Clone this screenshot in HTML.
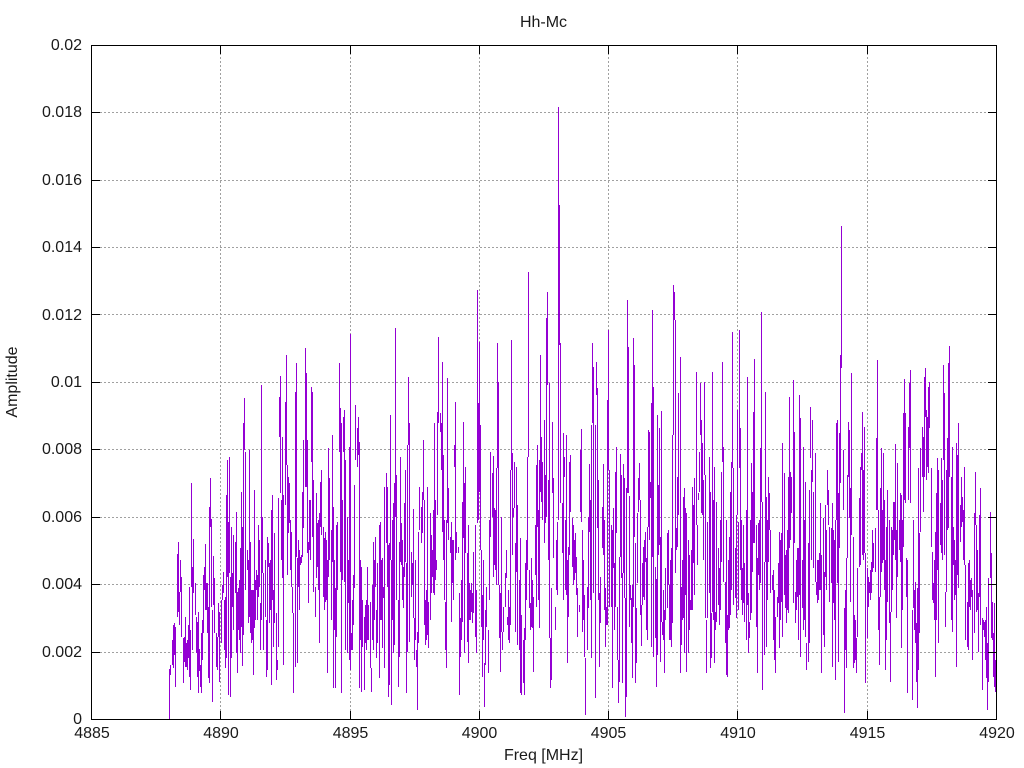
<!DOCTYPE html>
<html><head><meta charset="utf-8"><title>Hh-Mc</title>
<style>html,body{margin:0;padding:0;background:#fff;overflow:hidden}svg{display:block}text{font-family:"Liberation Sans",sans-serif;font-size:16px;fill:#1a1a1a}</style>
</head><body>
<svg width="1024" height="768" viewBox="0 0 1024 768" xmlns="http://www.w3.org/2000/svg">
<rect width="1024" height="768" fill="#fff"/>
<g stroke="#a0a0a0" stroke-width="1" stroke-dasharray="2 2" fill="none" shape-rendering="crispEdges">
<path d="M100 112.5H988M100 180.5H988M100 247.5H988M100 314.5H988M100 382.5H988M100 449.5H988M100 517.5H988M100 584.5H988M100 652.5H988"/>
<path d="M220.5 53V711M350.5 53V711M479.5 53V711M608.5 53V711M737.5 53V711M867.5 53V711"/>
</g>
<g transform="translate(.5,0)" stroke="#9400d3" stroke-width="1" fill="none" shape-rendering="crispEdges">
<path d="M169 669V719M170 665V675M172 640V665M173 625V668M174 623V655M175 627V687M177 554V617M178 542V612M179 592V625M180 560V592M181 577V637M183 638V683M184 637V662M185 617V667M186 643V667M188 625V658M189 587V677M190 630V690M191 483V587M192 567V650M193 539V593M195 583V615M196 617V653M197 622V677M198 612V693M199 649V671M200 665V687M201 633V693M203 575V633M204 567V590M205 544V610M206 583V610M207 583V633M208 607V678M209 507V683M210 478V527M211 519V607M212 610V702M213 556V605M214 578V633M216 633V667M217 637V670M218 603V637M219 612V682M221 600V643M222 585V600M223 572V593M225 597V668M226 495V658M227 460V577M228 522V695M229 457V573M230 577V697M231 527V658M232 573V607M233 535V630M235 542V593M236 512V653M237 592V673M238 588V630M240 548V653M241 492V627M242 527V666M243 423V635M244 398V450M245 452V590M247 550V570M248 560V623M249 450V617M250 542V633M251 590V643M253 590V675M254 490V628M255 580V620M256 570V590M257 575V620M258 525V597M259 540V587M260 603V650M261 385V620M262 517V573M263 573V650M265 560V617M266 620V677M267 537V670M268 543V567M269 563V623M271 510V685M272 495V600M273 590V647M274 533V623M276 613V680M277 660V670M278 498V647M279 397V437M280 376V493M282 437V578M283 495V665M285 402V505M286 355V465M287 465V575M288 477V533M289 483V523M291 532V587M292 587V613M293 613V693M295 392V667M296 363V557M297 558V663M298 540V587M300 557V565M301 555V563M302 492V557M303 440V528M305 348V487M306 373V487M307 440V553M308 542V603M309 500V550M311 387V462M312 392V537M313 480V592M315 587V617M316 493V578M317 523V567M319 513V643M320 482V527M321 470V535M323 527V597M324 538V610M325 532V602M327 560V673M328 448V577M329 478V560M331 530V620M332 435V562M333 507V688M335 588V688M336 525V637M337 522V590M339 363V452M340 408V572M341 423V693M343 417V452M344 410V582M345 460V650M347 517V653M348 560V603M349 447V660M350 334V670M351 633V650M353 575V625M354 485V588M355 405V460M357 428V467M358 417V455M359 442V688M361 567V692M362 600V647M364 617V690M365 605V643M367 567V640M368 605V640M370 602V668M371 668V692M372 585V640M373 542V650M375 537V587M376 610V658M377 563V643M379 525V678"/>
<path d="M380 522V620M382 558V648M383 587V598M384 487V668M386 473V543M387 487V587M388 545V697M389 543V685M390 415V560M391 560V705M393 503V653M394 483V645M395 328V517M396 475V600M398 600V687M399 542V657M400 457V562M401 523V565M403 567V608M404 503V577M405 470V562M406 563V693M407 445V652M408 377V445M409 423V642M411 552V597M412 563V585M413 509V618M414 618V660M416 650V667M417 632V710M418 532V643M419 487V530M421 507V543M422 492V533M423 440V500M424 500V625M425 600V645M427 487V635M428 602V648M430 513V620M431 535V593M432 550V577M433 510V593M434 423V595M436 560V570M437 412V515M438 337V423M440 413V432M441 423V470M442 362V532M443 455V560M445 602V650M446 520V668M447 378V523M448 488V540M450 537V553M451 522V622M452 540V583M454 445V467M455 402V560M456 532V553M458 547V553M459 593V695M460 618V657M462 502V622M463 422V538M464 483V653M465 467V553M467 553V642M468 525V663M469 583V620M471 583V612M472 593V623M473 552V613M475 525V637M476 590V653M477 290V523M478 403V520M479 342V492M480 425V550M481 550V627M482 595V677M484 663V707M485 610V665M486 587V627M488 630V673M490 452V537M492 473V517M493 456V577M494 508V565M496 468V585M497 343V468M498 382V585M499 585V638M500 593V672M501 517V632M502 632V650M503 607V632M505 573V607M506 550V578M507 617V625M509 607V643M510 470V625M511 340V470M512 453V555M513 508V517M514 462V508M515 543V632M516 467V572M517 505V645M520 538V693M521 615V695M523 640V683M524 628V695M525 563V640M527 457V570M528 272V457M529 570V608M530 603V630M531 558V627M532 580V628M533 597V672M535 525V575M536 465V607M537 445V527M539 460V628M540 355V492M541 437V502M542 462V520M544 420V543M545 475V523M546 318V517M547 292V385M549 383V638M550 638V688M551 588V680M552 422V493M553 478V558M555 607V630M557 522V595M558 107V520M559 205V345M560 343V503M562 503V553M563 433V600M564 457V477M566 435V595M567 560V663M568 547V617M569 462V555M570 455V512M572 518V567M573 525V585M575 533V573M576 557V595M577 588V637M579 605V612M580 450V512M581 429V522M582 530V632M584 595V657M585 658V715M587 587V650M588 517V608M589 464V532M591 425V658M592 343V423M593 367V593M595 425V698M596 362V395M597 388V528M599 593V667"/>
<path d="M600 577V623M602 507V548M603 464V555M605 588V647M606 607V625M607 400V625M608 330V470M609 470V607M611 525V607M612 530V688M613 508V568M614 563V630M615 472V607M616 447V533M617 607V660M618 660V703M619 557V682M620 454V557M621 475V578M622 573V683M623 464V573M624 478V598M625 598V717M626 488V697M627 300V493M628 347V493M629 496V627M630 585V600M631 598V643M632 585V678M633 338V607M634 365V537M635 543V683M636 608V663M637 513V583M638 478V512M639 463V500M640 500V615M641 605V646M642 563V605M643 547V597M645 532V562M646 558V630M647 527V640M648 430V527M649 432V540M650 482V498M651 403V647M652 310V557M653 387V657M655 567V638M656 579V687M657 415V655M658 485V555M659 428V545M660 537V662M661 411V622M662 622V635M664 610V673M665 568V620M667 533V608M668 530V585M669 585V640M671 548V647M672 435V623M673 285V435M674 292V320M675 320V573M676 528V550M677 477V547M678 393V515M680 357V673M681 587V645M683 497V618M684 488V653M685 508V595M686 513V672M688 540V653M689 555V630M690 600V610M692 487V610M693 505V563M694 478V595M696 372V525M697 525V565M698 493V500M699 452V492M700 383V435M701 420V513M702 443V515M704 382V475M705 475V618M706 620V673M707 522V618M709 457V593M710 492V668M711 613V658M712 372V612M714 467V663M715 612V630M716 502V622M718 548V605M719 568V625M721 472V562M722 362V462M723 447V582M725 582V643M726 520V675M727 615V677M729 537V628M730 492V615M731 462V590M732 332V468M733 468V605M735 548V598M736 515V618M737 410V515M738 522V610M739 330V468M740 428V570M742 568V615M743 525V603M744 563V622M746 510V640M747 377V605M748 593V653M749 622V638M751 463V613M752 492V572M753 412V543M754 359V543M756 525V627M757 558V673M758 523V575M760 448V583M761 312V502M762 502V690M764 562V655M765 392V562M766 497V647M768 477V562M769 493V530M770 530V593M772 575V590M774 590V660M775 617V673M777 597V617M778 563V603M779 532V648M781 533V602M782 443V637M784 473V595M785 555V608M786 550V623M788 477V613M789 397V548M790 472V540M791 477V513M793 380V603M794 432V543M795 592V623M797 548V597M798 548V640M799 395V595M800 418V657M802 560V608M803 447V630M805 482V637M806 643V670M808 543V662M809 490V643"/>
<path d="M810 407V458M812 420V482M813 492V568M815 453V582M816 582V595M817 560V603M819 553V590M820 503V590M821 555V673M823 518V635M824 572V647M825 505V577M827 470V505M828 490V525M829 527V602M831 528V583M832 503V667M833 530V603M835 520V680M836 423V520M837 420V583M838 493V662M839 433V548M840 355V483M841 226V368M843 450V510M844 608V713M846 558V668M847 475V558M848 422V477M849 430V518M850 488V602M851 373V535M853 537V668M854 615V663M856 638V673M857 568V637M859 498V567M860 467V565M861 453V470M862 412V555M864 427V553M865 553V683M867 568V638M868 577V607M869 582V593M871 562V593M872 530V572M873 543V568M875 528V572M876 438V510M877 360V510M878 510V630M879 597V665M880 488V597M881 448V572M882 510V563M883 453V560M885 560V670M886 527V640M887 490V602M889 520V623M890 612V682M891 527V612M893 502V555M894 502V540M895 444V560M896 530V618M897 463V577M899 520V550M900 493V562M901 495V648M903 413V547M904 379V500M905 413V503M906 558V597M907 560V693M908 427V500M909 383V448M910 370V503M912 610V700M913 520V608M915 582V643M916 623V682M917 588V708M918 468V670M919 533V633M920 448V532M922 427V477M923 437V512M924 377V477M925 368V417M927 417V467M928 387V473M929 382V428M931 468V547M932 552V600M933 583V603M935 532V677M936 493V620M937 458V570M938 470V643M940 503V545M941 458V553M943 365V460M944 393V555M945 592V627M946 470V592M947 438V530M948 363V528M949 346V477M951 477V620M952 447V632M953 527V565M955 560V595M956 443V667M957 455V575M958 423V588M960 505V542M961 477V527M962 497V522M964 467V565M965 565V640M967 602V647M968 563V650M969 560V607M971 578V597M972 590V660M974 513V633M975 472V525M976 525V612M978 593V652M979 515V597M980 488V625M982 618V690M983 620V630M984 622V637M986 607V678M987 643V710M988 578V682M990 512V578M991 553V638M992 602V640M993 633V677M994 603V687M995 660V692"/>
<path d="M187 640V670M202 620V660M224 600V650M239 580V640M252 590V640M270 560V610M281 500V560M290 520V570M299 550V610M310 500V560M318 520V590M326 540V600M334 560V630M342 500V580M352 600V650M360 560V640M366 600V650M374 560V620M381 560V620M392 520V620M402 540V600M415 560V640M426 590V640M435 500V580M444 520V600M453 540V600M461 580V640M470 590V620M483 560V640M489 520V600M495 510V570M508 590V640M519 580V650M526 540V600M538 510V600M548 480V560M556 540V590M565 520V590M574 540V580M583 560V620M590 500V600M598 480V600M604 520V610M644 540V600M663 590V640M670 560V640M682 560V620M691 550V610M703 480V560M713 500V620M720 520V610M728 560V630M741 520V600M750 520V620M759 520V590M767 520V600M773 570V640M780 540V620M787 530V610M796 560V610M804 520V620M811 470V560M818 560V600M826 530V590M834 540V620M845 590V650M855 620V660M863 470V560M870 570V600M884 500V590M892 530V590M902 520V610M914 590V630M926 410V480M934 560V620M942 480V560M954 540V600M963 510V560M970 580V610M977 550V610M985 620V660"/>
</g>
<g stroke="#000" stroke-width="1" fill="none" shape-rendering="crispEdges">
<rect x="91.5" y="45.5" width="905" height="674"/>
<path d="M91 112.5H100M91 180.5H100M91 247.5H100M91 314.5H100M91 382.5H100M91 449.5H100M91 517.5H100M91 584.5H100M91 652.5H100"/>
<path d="M988 112.5H997M988 180.5H997M988 247.5H997M988 314.5H997M988 382.5H997M988 449.5H997M988 517.5H997M988 584.5H997M988 652.5H997"/>
<path d="M220.5 711V720M350.5 711V720M479.5 711V720M608.5 711V720M737.5 711V720M867.5 711V720"/>
<path d="M220.5 45V54M350.5 45V54M479.5 45V54M608.5 45V54M737.5 45V54M867.5 45V54"/>
</g>
<g text-anchor="end">
<text x="82" y="50">0.02</text>
<text x="82" y="117">0.018</text>
<text x="82" y="185">0.016</text>
<text x="82" y="252">0.014</text>
<text x="82" y="320">0.012</text>
<text x="82" y="387">0.01</text>
<text x="82" y="454">0.008</text>
<text x="82" y="522">0.006</text>
<text x="82" y="589">0.004</text>
<text x="82" y="657">0.002</text>
<text x="82" y="724">0</text>
</g>
<g text-anchor="middle">
<text x="92" y="738">4885</text>
<text x="221" y="738">4890</text>
<text x="350.5" y="738">4895</text>
<text x="479.5" y="738">4900</text>
<text x="608.5" y="738">4905</text>
<text x="738" y="738">4910</text>
<text x="867.5" y="738">4915</text>
<text x="997" y="738">4920</text>
<text x="543.5" y="27">Hh-Mc</text>
<text x="543.5" y="760">Freq [MHz]</text>
<text transform="translate(17,382) rotate(-90)">Amplitude</text>
</g>
</svg>
</body></html>
